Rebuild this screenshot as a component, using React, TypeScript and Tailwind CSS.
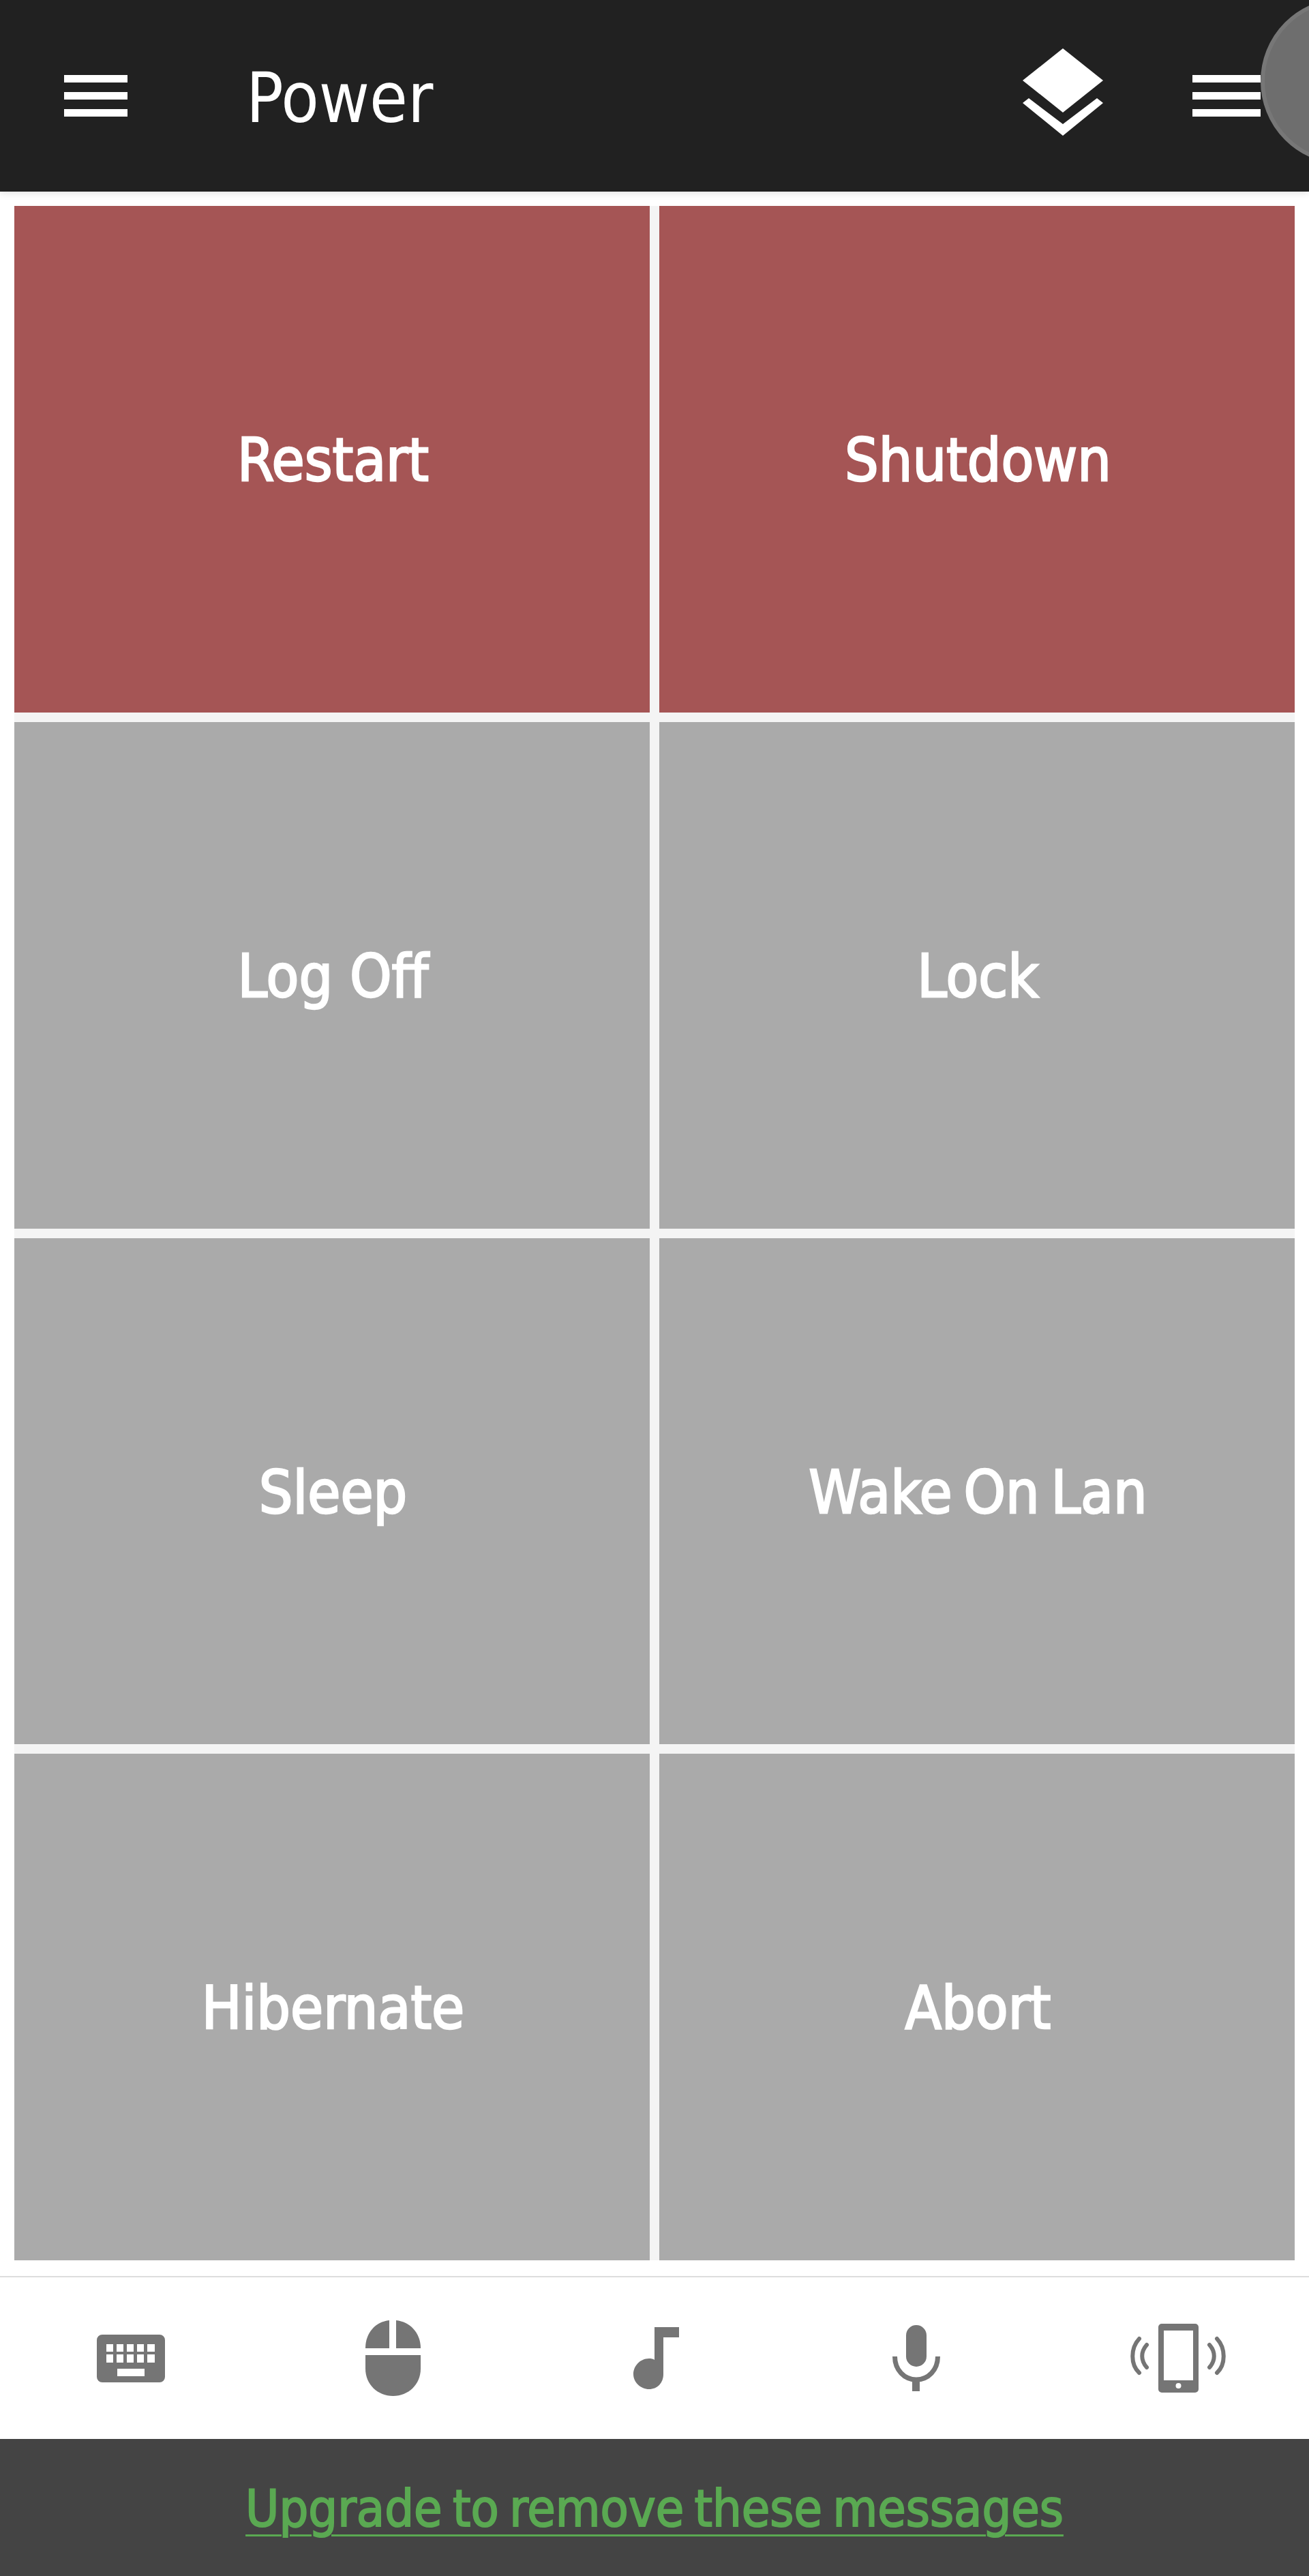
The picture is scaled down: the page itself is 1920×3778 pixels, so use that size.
import React from 'react';

const buttons = [
  { label: 'Restart', danger: true },
  { label: 'Shutdown', danger: true },
  { label: 'Log Off', wide: true },
  { label: 'Lock' },
  { label: 'Sleep' },
  { label: 'Wake On Lan' },
  { label: 'Hibernate' },
  { label: 'Abort' },
];

const fontClass = "font-['DejaVu_Sans_Condensed','DejaVu_Sans',sans-serif]";

const Burger = ({ className }: { className: string }) => (
  <div className={`flex flex-col gap-[14px] ${className}`}>
    <div className="h-[11px] bg-white" />
    <div className="h-[11px] bg-white" />
    <div className="h-[11px] bg-white" />
  </div>
);

const KeyboardIcon = () => (
  <svg width="100" height="70" viewBox="0 0 100 70" fill="#757575">
    <path
      fillRule="evenodd"
      d="M8 0h84a8 8 0 0 1 8 8v54a8 8 0 0 1-8 8H8a8 8 0 0 1-8-8V8a8 8 0 0 1 8-8zM14 14v11h10V14zM29 14v11h10V14zM44 14v11h10V14zM59 14v11h10V14zM74 14v11h11V14zM14 29v12h10V29zM29 29v12h10V29zM44 29v12h10V29zM59 29v12h10V29zM74 29v12h11V29zM30 50v11h40V50z"
    />
  </svg>
);

const MouseIcon = () => (
  <svg width="81" height="111" viewBox="0 0 81 111" fill="#757575">
    <path d="M35 0C15 2 0 18 0 41h35z" />
    <path d="M45 0c20 2 36 18 36 41H45z" />
    <path d="M0 51h81v20c0 23-18 40-40.500 40S0 94 0 71z" />
  </svg>
);

const NoteIcon = () => (
  <svg className="ml-[5px]" width="67" height="91" viewBox="0 0 67 91" fill="#757575">
    <path d="M31 0h36v15H44v54c0 13-9 22-21 22S0 81 0 69s10-23 23-23c3 0 6 .500 8 2z" />
  </svg>
);

const MicIcon = () => (
  <svg width="70" height="97" viewBox="0 0 70 97" fill="#757575">
    <rect x="20" y="0" width="30" height="61" rx="15" />
    <path d="M3.500 46c0 20 14 34 31.500 34s31.500-14 31.500-34" fill="none" stroke="#757575" strokeWidth="7" />
    <rect x="29" y="78" width="11" height="19" />
  </svg>
);

const VibrateIcon = () => (
  <svg width="142" height="101" viewBox="0 0 142 101" fill="#757575">
    <path
      fillRule="evenodd"
      d="M47 0h49a5 5 0 0 1 5 5v91a5 5 0 0 1-5 5H47a5 5 0 0 1-5-5V5a5 5 0 0 1 5-5zM50 10v73h43V10zM71.500 87a4 4 0 1 0 0 8 4 4 0 0 0 0-8z"
    />
    <g fill="none" stroke="#757575" strokeWidth="6" strokeLinecap="round">
      <path d="M14 22C1 36 1 60 14 72" />
      <path d="M25 31c-9 10-9 23 0 33" />
      <path d="M128 22c13 14 13 38 0 50" />
      <path d="M117 31c9 10 9 23 0 33" />
    </g>
  </svg>
);

export default function App() {
  return (
    <div className={`w-[1920px] h-[3778px] flex flex-col overflow-hidden bg-white ${fontClass}`}>
      {/* Top bar */}
      <div className="relative z-10 h-[281px] shrink-0 flex items-center bg-[#212121] pb-[1px] shadow-[0_2px_10px_rgba(0,0,0,0.12)]">
        <Burger className="w-[93px] ml-[94px]" />
        <span className="ml-[174px] pt-[8px] text-[101px] leading-none text-white">Power</span>
        <svg className="ml-auto mb-[10px]" width="118" height="128" viewBox="0 0 118 128" fill="white">
          <path d="M0 47 59 0l59 47-59 47z" />
          <path d="M0 80l9-7 50 38 50-38 9 7-59 48z" />
        </svg>
        <Burger className="w-[100px] ml-[131px] mr-[71px]" />
        <div className="absolute left-[1849px] top-[-3px] w-[244px] h-[244px] rounded-full bg-[#6e6e6e] border-[6px] border-[#777777]" />
      </div>

      {/* Power actions */}
      <div className="flex-1 bg-white px-[21px] pt-[21px] pb-[23px]">
        <div className="h-full grid grid-cols-2 grid-rows-4 gap-[14px] bg-[#f4f4f4]">
          {buttons.map((b) => (
            <button
              key={b.label}
              className={`flex items-center justify-center pt-[4px] pl-[3px] text-white text-[87px] [-webkit-text-stroke:2.5px_white] ${
                b.wide ? '' : '[word-spacing:-8px]'
              } ${b.danger ? 'bg-[#a55555]' : 'bg-[#aaaaaa]'}`}
            >
              {b.label}
            </button>
          ))}
        </div>
      </div>

      {/* Bottom tabs */}
      <div className="h-[239px] shrink-0 grid grid-cols-5 items-center justify-items-center bg-white border-t-2 border-[#dddddd]">
        <KeyboardIcon />
        <MouseIcon />
        <NoteIcon />
        <MicIcon />
        <VibrateIcon />
      </div>

      {/* Upgrade banner */}
      <div className="h-[201px] shrink-0 flex items-center justify-center bg-[#444444]">
        <a className="pt-[4px] text-[75px] leading-none text-[#5aa952] [word-spacing:-6px] [-webkit-text-stroke:2px_#5aa952] underline underline-offset-[12px] decoration-[3px]">
          Upgrade to remove these messages
        </a>
      </div>
    </div>
  );
}
